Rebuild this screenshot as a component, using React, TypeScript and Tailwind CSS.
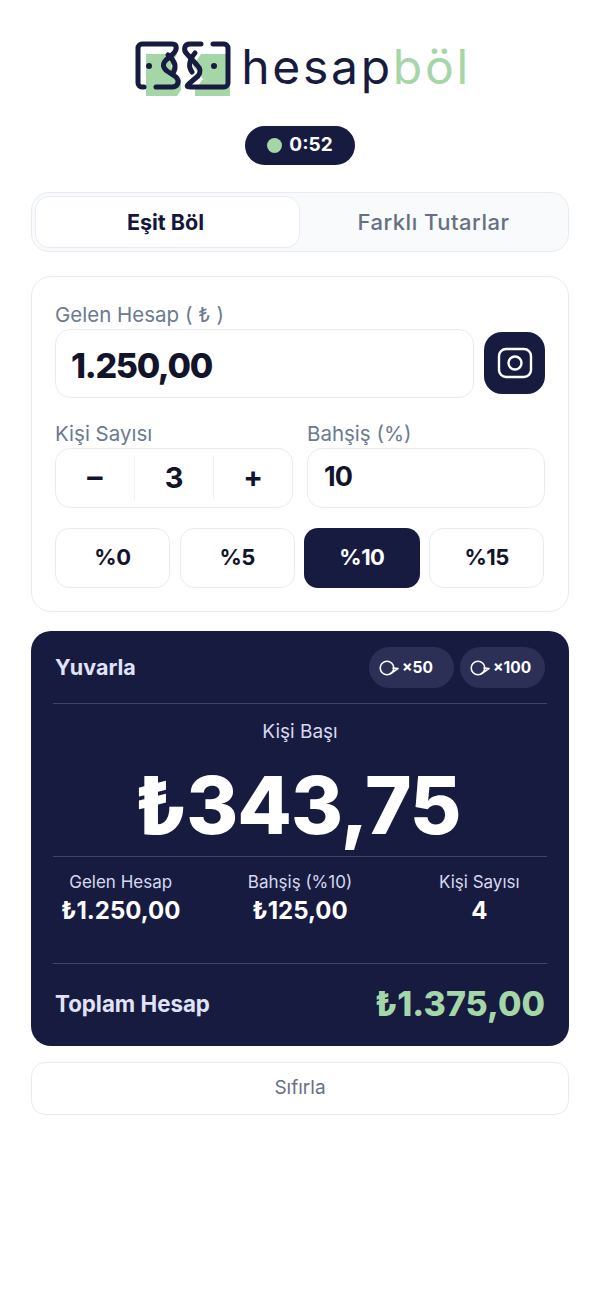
const FONT = "font-['Inter','Noto_Sans',sans-serif]";

const RoundIcon = () => (
  <svg viewBox="0 0 23 18" className="w-[23px] h-[18px] shrink-0" fill="none" stroke="currentColor" strokeWidth="1.6">
    <circle cx="8" cy="9" r="6.8" />
    <path d="M11 15l8-5.5-5-.5" strokeLinecap="round" strokeLinejoin="round" />
  </svg>
);

const Logo = () => (
  <svg viewBox="0 0 96 56" className="w-[96px] h-[56px] shrink-0" fill="none">
    <path d="M11 13H42L36 25L46 40V49L42 55H11Z" fill="#A5D6A7" />
    <path d="M66 13H95V55H60V49L68 38L58 25Z" fill="#A5D6A7" />
    <g stroke="#181B40" strokeWidth="5" strokeLinecap="round" strokeLinejoin="round">
      <path d="M9 46H7a4 4 0 0 1-4-4V7a4 4 0 0 1 4-4H37C43 3 42 9 38 13L31 19C27 23 28 27 32 30L41 36C45 40 43 46 37 46H21" />
      <path d="M66 3H55C49 3 48 9 52 13L62 24C66 28 66 31 63 35L56 41C51 45 51 46 56 46H89a4 4 0 0 0 4-4V7a4 4 0 0 0-4-4H78" />
      <path d="M33 14C40 20 42 26 38 32" />
      <path d="M60 12C55 18 52 24 57 31" />
    </g>
    <circle cx="14" cy="25" r="3" fill="#181B40" />
    <circle cx="79" cy="25" r="3" fill="#181B40" />
  </svg>
);

const Stat = ({ label, value }: { label: string; value: string }) => (
  <div className="flex flex-col items-center">
    <span className="text-[17px] leading-[22px] text-[#d6d9f0]">{label}</span>
    <span className="text-[24px] leading-[35px] font-bold text-white">{value}</span>
  </div>
);

const App = () => {
  return (
    <div className={`${FONT} w-[600px] h-[1298px] bg-white px-[31px] pt-[40px] text-[#181B40]`}>
      <div className="flex items-center justify-center gap-[10px] h-[58px] pl-[6px]">
        <Logo />
        <div className="text-[48px] leading-[58px] font-normal tracking-[2.7px] pb-[4px]">
          hesap<span className="text-[#A5D6A7]">böl</span>
        </div>
      </div>

      <div className="flex justify-center mt-[28px]">
        <div className="flex items-center justify-center gap-[7px] w-[110px] h-[39px] rounded-full bg-[#181B40]">
          <span className="w-[15px] h-[15px] rounded-full bg-[#A5D6A7]" />
          <span className="text-[19px] font-bold text-white">0:52</span>
        </div>
      </div>

      <div className="flex mt-[27px] h-[60px] rounded-[18px] border border-[#e8ecf2] bg-[#f8fafc] p-[3px]">
        <div className="w-[265px] shrink-0 flex items-center justify-center pr-[4px] rounded-[14px] border border-[#e8ecf2] bg-white text-[21.5px] font-bold text-[#14163a]">
          Eşit Böl
        </div>
        <div className="flex-1 flex items-center justify-center pl-[2px] text-[22px] tracking-[0.5px] font-medium text-[#667085]">
          Farklı Tutarlar
        </div>
      </div>

      <div className="mt-[24px] h-[336px] rounded-[20px] border border-[#e8ecf2] bg-white px-[23px] pt-[24px]">
        <div className="text-[20.5px] leading-[28px] text-[#6b7a90]">
          Gelen Hesap (<span className="px-[6px]">₺</span>)
        </div>
        <div className="flex items-center gap-[10px]">
          <div className="flex-1 flex items-center h-[69px] pl-[15px] pt-[3px] rounded-[15px] border border-[#e8ecf2] text-[34px] tracking-[-1.3px] font-extrabold text-[#11142b]">
            1.250,00
          </div>
          <div className="flex items-center justify-center w-[61px] h-[62px] -mt-[2px] rounded-[18px] bg-[#181B40] text-white">
            <svg viewBox="0 0 36 32" className="w-[36px] h-[32px]" fill="none" stroke="currentColor" strokeWidth="2.4">
              <rect x="2" y="2" width="32" height="28" rx="7" />
              <circle cx="18" cy="16" r="6.5" />
            </svg>
          </div>
        </div>

        <div className="flex gap-[14px] mt-[22px]">
          <div className="w-[238px]">
            <div className="text-[20.5px] leading-[28px] text-[#6b7a90]">Kişi Sayısı</div>
            <div className="flex items-center h-[60px] rounded-[15px] border border-[#e8ecf2] text-[29px] font-bold text-[#11142b]">
              <span className="flex-1 text-center">
                <span className="inline-block scale-x-[1.6] -translate-y-[1px]">-</span>
              </span>
              <span className="flex-1 h-[44px] flex items-center justify-center border-x border-[#eef1f5]">3</span>
              <span className="flex-1 text-center -translate-y-[1px]">+</span>
            </div>
          </div>
          <div className="flex-1">
            <div className="text-[20.5px] leading-[28px] text-[#6b7a90]">Bahşiş (%)</div>
            <div className="flex items-center h-[60px] pl-[16px] pb-[2px] rounded-[15px] border border-[#e8ecf2] text-[27px] tracking-[-1px] font-bold text-[#11142b]">
              10
            </div>
          </div>
        </div>

        <div className="grid grid-cols-4 gap-[10px] mt-[20px] pr-[1px]">
          {["%0", "%5", "%10", "%15"].map((tip) =>
            tip === "%10" ? (
              <div key={tip} className="flex items-center justify-center h-[60px] -mx-[1px] pb-[2px] rounded-[14px] bg-[#181B40] text-[22px] tracking-[-0.5px] font-bold text-white">
                {tip}
              </div>
            ) : (
              <div key={tip} className="flex items-center justify-center h-[60px] pb-[2px] rounded-[14px] border border-[#e8ecf2] text-[22px] tracking-[-0.5px] font-bold text-[#11142b]">
                {tip}
              </div>
            ),
          )}
        </div>
      </div>

      <div className="mt-[19px] h-[415px] rounded-[20px] bg-[#181B40] px-[22px] pt-[16px] text-white">
        <div className="flex items-center justify-between h-[41px] pl-[2px] pr-[2px]">
          <span className="text-[21.5px] font-bold text-[#e0e3f7]">Yuvarla</span>
          <div className="flex gap-[6px]">
            {["×50", "×100"].map((x) => (
              <div key={x} className="flex items-center w-[85px] h-[41px] pl-[10px] rounded-full bg-[#2c3057] text-[15.5px] font-bold whitespace-nowrap">
                <RoundIcon />
                {x}
              </div>
            ))}
          </div>
        </div>
        <div className="border-t border-[#3f4368] mt-[15px]" />
        <div className="mt-[15px] text-center text-[19px] leading-[26px] text-[#d6d9f0]">Kişi Başı</div>
        <div className="mt-[11px] pr-[5px] text-center text-[79.3px] leading-[98px] font-extrabold tracking-[-1px] text-white">₺343,75</div>
        <div className="border-t border-[#3f4368] mt-[2px]" />
        <div className="grid grid-cols-3 -mx-[22px] mt-[14px] h-[92px]">
          <Stat label="Gelen Hesap" value="₺1.250,00" />
          <Stat label="Bahşiş (%10)" value="₺125,00" />
          <Stat label="Kişi Sayısı" value="4" />
        </div>
        <div className="border-t border-[#3f4368]" />
        <div className="flex items-center justify-between mt-[16px] px-[2px]">
          <span className="text-[22.3px] font-bold text-[#e0e3f7]">Toplam Hesap</span>
          <span className="text-[34px] leading-[48px] font-extrabold text-[#A5D6A7]">₺1.375,00</span>
        </div>
      </div>

      <div className="flex items-center justify-center mt-[16px] h-[53px] rounded-[14px] border border-[#e8ecf2] text-[19px] text-[#667085]">
        Sıfırla
      </div>
    </div>
  );
};

export default App;
